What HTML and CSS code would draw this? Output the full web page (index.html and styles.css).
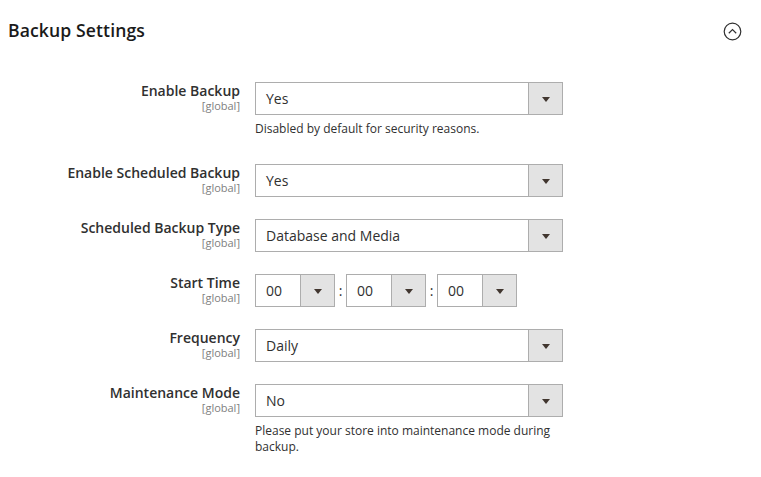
FILE: index.html
```html
<!DOCTYPE html>
<html>
<head>
<meta charset="utf-8">
<link rel="stylesheet" href="styles.css">
</head>
<body>
<div class="page">
  <div class="header">
    <h1 class="title">Backup Settings</h1>
    <svg class="toggle" width="19" height="19" viewBox="0 0 19 19">
      <circle cx="9.5" cy="9.5" r="8.3" fill="none" stroke="#303030" stroke-width="1.2"/>
      <path d="M5.8 11.2 L9.5 7.6 L13.2 11.2" fill="none" stroke="#303030" stroke-width="1.2"/>
    </svg>
  </div>
  <div class="form">
    <div class="row">
      <div class="label"><span class="name">Enable Backup</span><span class="scope">[global]</span></div>
      <div class="control">
        <div class="select"><span class="value">Yes</span><span class="arrow"></span></div>
        <div class="note">Disabled by default for security reasons.</div>
      </div>
    </div>
    <div class="row">
      <div class="label"><span class="name">Enable Scheduled Backup</span><span class="scope">[global]</span></div>
      <div class="control">
        <div class="select"><span class="value">Yes</span><span class="arrow"></span></div>
      </div>
    </div>
    <div class="row">
      <div class="label"><span class="name">Scheduled Backup Type</span><span class="scope">[global]</span></div>
      <div class="control">
        <div class="select"><span class="value">Database and Media</span><span class="arrow"></span></div>
      </div>
    </div>
    <div class="row">
      <div class="label"><span class="name">Start Time</span><span class="scope">[global]</span></div>
      <div class="control">
        <div class="time">
          <div class="select small"><span class="value">00</span><span class="arrow"></span></div>
          <span class="colon">:</span>
          <div class="select small"><span class="value">00</span><span class="arrow"></span></div>
          <span class="colon">:</span>
          <div class="select small"><span class="value">00</span><span class="arrow"></span></div>
        </div>
      </div>
    </div>
    <div class="row">
      <div class="label"><span class="name">Frequency</span><span class="scope">[global]</span></div>
      <div class="control">
        <div class="select"><span class="value">Daily</span><span class="arrow"></span></div>
      </div>
    </div>
    <div class="row">
      <div class="label"><span class="name">Maintenance Mode</span><span class="scope">[global]</span></div>
      <div class="control">
        <div class="select"><span class="value">No</span><span class="arrow"></span></div>
        <div class="note">Please put your store into maintenance mode during backup.</div>
      </div>
    </div>
  </div>
</div>
</body>
</html>
```

FILE: styles.css
```css
html, body {
  margin: 0;
  padding: 0;
  background: #ffffff;
}
body {
  font-family: "Open Sans", "Liberation Sans", sans-serif;
  color: #303030;
}
.page {
  padding: 0 19px 0 8px;
}
.header {
  display: flex;
  justify-content: space-between;
  align-items: center;
  height: 60px;
}
.title {
  margin: 0;
  font-size: 17.6px;
  font-weight: 600;
  color: #1a1a1a;
  letter-spacing: 0.1px;
}
.toggle {
  display: block;
  margin-top: 2px;
}
.form {
  padding-top: 22px;
  display: flex;
  flex-direction: column;
  gap: 22px;
}
.row {
  display: flex;
  align-items: flex-start;
}
.label {
  width: 232px;
  flex: none;
  display: flex;
  flex-direction: column;
  align-items: flex-end;
  padding-top: 1px;
  padding-right: 15px;
}
.name {
  font-size: 14px;
  font-weight: 600;
  line-height: 16px;
  color: #303030;
}
.scope {
  font-size: 11px;
  line-height: 12px;
  margin-top: 1px;
  color: #808080;
}
.control {
  width: 308px;
}
.select {
  box-sizing: border-box;
  height: 33px;
  width: 308px;
  border: 1px solid #adadad;
  display: flex;
  align-items: center;
  background: #fff;
}
.select .value {
  flex: 1;
  padding-left: 10px;
  font-size: 14px;
  color: #303030;
}
.select .arrow {
  width: 34px;
  height: 100%;
  box-sizing: border-box;
  border-left: 1px solid #adadad;
  background: #e3e3e3;
  position: relative;
  flex: none;
}
.select .arrow::after {
  content: "";
  position: absolute;
  left: 50%;
  top: 50%;
  margin-left: -4px;
  margin-top: -2px;
  border-left: 4px solid transparent;
  border-right: 4px solid transparent;
  border-top: 5px solid #41362f;
}
.select.small {
  width: 80px;
}
.time {
  display: flex;
  align-items: center;
}
.colon {
  width: 11px;
  text-align: center;
  font-size: 14px;
  color: #303030;
}
.note {
  margin-top: 6px;
  padding-bottom: 5px;
  font-size: 12px;
  line-height: 16px;
  color: #303030;
  padding-right: 10px;
}
```
